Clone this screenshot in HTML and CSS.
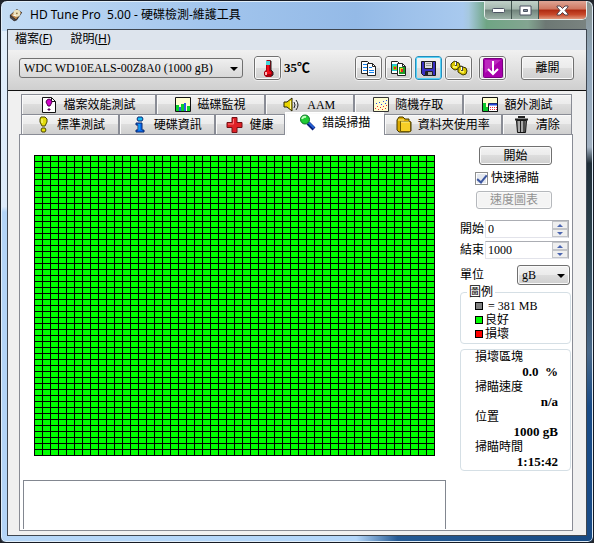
FILE: index.html
```html
<!DOCTYPE html>
<html lang="zh-Hant">
<head>
<meta charset="utf-8">
<title>HD Tune Pro 5.00</title>
<link rel="stylesheet" href="styles.css">
</head>
<body>
<div class="window">
  <header class="titlebar">
    <svg class="app-icon" viewBox="0 0 16 16"><path d="M1 8 9 1l6 4-6 9-3 1-5-4z" fill="#302c2b"/><path d="m2 8 7-6 5 3-6 8z" fill="#b98349"/><circle cx="9" cy="6" r="4" fill="#eee2bc"/><circle cx="9" cy="6" r="1" fill="#8a6b3c"/><path d="m2 9 5 4-1 2-5-4z" fill="#4e4a4c"/><path d="m4 8 4 1" stroke="#fff"/></svg>
    <h1 class="title">HD Tune Pro&nbsp; 5.00 - 硬碟檢測-維護工具</h1>
    <div class="controls">
      <button class="control" aria-label="Minimize"><svg width="13" height="7"><rect x=".5" y="1.5" width="12" height="4" rx="1" fill="#fff" stroke="#4c5362"/></svg></button>
      <button class="control" aria-label="Maximize"><svg width="13" height="11"><path d="M1 1h11v9H1z" fill="#fff" stroke="#4c5362"/><path d="M4.500 4.500h4v2h-4z" fill="#8992a0" stroke="#4c5362"/></svg></button>
      <button class="control control-close" aria-label="Close"><svg width="13" height="11"><path d="M1 1h3l2.500 2.500L9 1h3v1L9 5.500 12 9v1H9L6.500 7.500 4 10H1V9l3-3.500L1 2z" fill="#fff" stroke="#55424a"/></svg></button>
    </div>
  </header>
  <div class="client">
    <nav class="menubar">
      <a class="menu" href="#">檔案(<u>F</u>)</a>
      <a class="menu" href="#">說明(<u>H</u>)</a>
    </nav>
    <div class="toolbar">
      <span class="select-wrap drive"><select class="select" aria-label="Drive"><option>WDC WD10EALS-00Z8A0 (1000 gB)</option></select></span>
      <button class="tool" aria-label="Temperature"><svg width="16" height="18"><path d="M6 2 7 1h3l1 1v9l2 2v3l-2 2H6l-2-2v-3l2-2z" fill="#a80010"/><path d="M6 2h4v4H6z" fill="#46d4d8"/><path d="M7 6h2v6l2 1v2H6v-2l1-1z" fill="#f30b16"/><path d="M5 13h2v3H5z" fill="#ffb4b4"/><path d="M10 2h1v9l2 2v3l-2 1" fill="none" stroke="#222"/></svg></button>
      <output class="temperature">35<span>℃</span></output>
      <div class="tools">
        <button class="tool" aria-label="Copy text"><svg width="17" height="18"><path d="M1.500 2.500h6l2 2v10h-8z" fill="#fff" stroke="#222"/><path d="M3 5.500h4M3 8.500h5M3 11.500h5" stroke="#1582ed"/><path d="M7.500 4.500h5l3 3v9h-8z" fill="#fff" stroke="#222"/><path d="M12.500 4.500v3h3" fill="none" stroke="#222"/><path d="M9 8.500h3M9 11.500h5M9 13.500h5" stroke="#1582ed"/></svg></button>
        <button class="tool" aria-label="Copy image"><svg width="17" height="18"><path d="M1.500 2.500h6l2 2v10h-8z" fill="#fff" stroke="#222"/><path d="M2 5h6v7H2z" fill="#2ccbd2"/><path d="M3 7h4v4H3z" fill="#7ecf18"/><path d="M4 8h2v2H4z" fill="#e22"/><path d="M7.500 4.500h5l3 3v9h-8z" fill="#fff" stroke="#222"/><path d="M12.500 4.500v3h3" fill="none" stroke="#222"/><path d="M9 8h6v7H9z" fill="#1d9b27"/><path d="M10 9h3v4h-3z" fill="#e7d51a"/><path d="M11 10h2v3h-2z" fill="#e22"/></svg></button>
        <button class="tool tool-focus" aria-label="Save"><svg width="17" height="18"><path d="M1.500 2.500h14v14h-12l-2-2z" fill="#3930c4" stroke="#15151e"/><path d="M4.500 2.500h8v7h-8z" fill="#ddd" stroke="#222"/><path d="M6 4.500h5M6 6.500h5" stroke="#999"/><path d="M5.500 12.500h7v4h-7z" fill="#aaa" stroke="#222"/><path d="M6 13h2v3H6z" fill="#222"/></svg></button>
        <button class="tool" aria-label="Options"><svg width="18" height="18"><g fill="#d8c500" stroke="#3e3900"><path d="m3 3 2-1 1 1 3 1 1 3-2 3-3 1-2-1-2-2V5z"/><path d="m8 9 3-2 2 1 3 1 1 3-1 3-3 1-2-1-3-2z"/></g><path d="M3 8h4M10 12l4 1" stroke="#fff45a" stroke-width="2"/><path d="M6 2v5M12 7v5" stroke="#444" stroke-width="2"/><path d="M5.500 3v3m6 2v3" stroke="#fff"/></svg></button>
        <button class="tool tool-download" aria-label="Minimize to tray"><svg width="20" height="20"><rect x=".5" y=".5" width="19" height="19" rx="1" fill="#a800ac" stroke="#780080"/><path d="M2 2h16L2 15z" fill="#d051d0" opacity=".5"/><path d="M10 3v12M5 11l5 5 5-5" fill="none" stroke="#fff" stroke-width="2"/></svg></button>
        <button class="push exit">離開</button>
      </div>
    </div>
    <main class="body">
      <div class="tabs" role="tablist">
        <div class="tab-row">
          <button class="tab w135" role="tab"><svg width="16" height="17"><path d="M1.500 1.500h9l4 4v11h-13z" fill="#fff" stroke="#111"/><path d="M10.500 1.500v4h4" fill="none" stroke="#111"/><path d="m6 4 2-1 2 1 1 2-2 4H7L5 6z" fill="#d400cc" stroke="#500050"/><path d="M7 13h2v1H7z" fill="#d400cc" stroke="#500050"/></svg>檔案效能測試</button>
          <button class="tab w109" role="tab"><svg width="16" height="17"><path d="M.5 1.500h15v14H.5z" fill="#fffed0" stroke="#111"/><path d="M1 9h3v6H1zm5-1h3v7H6zm6 2h3v5h-3z" fill="#08d22c"/><path d="M4 11h2v4H4zm5-4h2v8H9z" fill="#3157e8"/></svg>磁碟監視</button>
          <button class="tab w88" role="tab"><svg width="18" height="16"><path d="M1 5h3l5-4v13l-5-4H1z" fill="#ead600" stroke="#282500"/><path d="M7.500 4v8" stroke="#fff799"/><path d="M11 5q2 3 0 6M13 3q4 5 0 10" fill="none" stroke="#222"/></svg><span class="latin">AAM</span></button>
          <button class="tab w109" role="tab"><svg width="16" height="17"><path d="M.5 1.500h15v14H.5z" fill="#fffed0" stroke="#333"/><path d="M2 12h1v1H2zm2-2h1v1H4zm1 3h1v1H5zm2-2h1v1H7zm2 2h1v1H9zm1-3h1v1h-1zm2 2h1v1h-1zm1-3h1v1h-1z" fill="#f03030"/><path d="M3 7h1v1H3zm3-1h1v1H6zm2 2h1v1H8zm2-3h1v1h-1zm2 2h1v1h-1zm1-3h1v1h-1z" fill="#284dea"/></svg>隨機存取</button>
          <button class="tab w109" role="tab"><svg width="16" height="17"><path d="M.5 1.500h15v14H.5z" fill="#fffed0" stroke="#111"/><path d="M1 7h3v8H1zm3 4h3v4H4z" fill="#0bc82c"/><path d="M6.500 7.500h9v8h-9z" fill="#fff" stroke="#111"/><path d="M7 8.500h8" stroke="#2447d9" stroke-width="2"/><path d="M8 11.500h7m-7 2h7" stroke="#e34" stroke-dasharray="1 1"/></svg>額外測試</button>
        </div>
        <div class="tab-row">
          <button class="tab w98" role="tab"><svg width="16" height="17"><path d="m6 1 4 0 2 2v3l-2 4H7L5 6V3z" fill="#e3dc0c" stroke="#4b4600"/><path d="M7 3v4" stroke="#ffffaa"/><path d="M7 12h3l1 2-1 2H7l-1-2z" fill="#e3dc0c" stroke="#4b4600"/></svg>標準測試</button>
          <button class="tab w96" role="tab"><svg width="16" height="17"><path d="M6 1h4l1 2-1 2H6L5 3z" fill="#1bb9f1" stroke="#062a77"/><path d="M4 7h6v7h2v2H4v-2h2V9H4z" fill="#0a6ff2" stroke="#08266c"/><path d="M7 8v6" stroke="#20bdf5"/></svg>硬碟資訊</button>
          <button class="tab w70" role="tab"><svg width="17" height="17"><path d="M6 1.500h5v5h5v5h-5v5H6v-5H1v-5h5z" fill="#df2026" stroke="#741015"/><path d="M7.500 3v5H2" fill="none" stroke="#f77"/></svg>健康</button>
          <button class="tab tab-active w99" role="tab" aria-selected="true"><svg width="17" height="17"><path d="m9 9 6 6" stroke="#081b77" stroke-width="4"/><path d="m9 8 6 6" stroke="#2460d5" stroke-width="2"/><circle cx="6" cy="5.500" r="4.500" fill="#20cc35" stroke="#087022"/><path d="M3 5q1-3 4-2" fill="none" stroke="#c2ffc0" stroke-width="2"/></svg>錯誤掃描</button>
          <button class="tab w118" role="tab"><svg width="16" height="17"><path d="m1 4 2-3h4l2 2h4v3h2v9l-2 1H3l-2-2z" fill="#dba900" stroke="#453800"/><path d="M4.500 5.500h10v10h-10z" fill="#f7cf27" stroke="#715a00"/><path d="M2 4h6M5 6h8" stroke="#fff48a"/></svg>資料夾使用率</button>
          <button class="tab w70" role="tab"><svg width="16" height="17"><path d="M2.500 4.500h10l-1 12h-8z" fill="#777" stroke="#111"/><path d="M5 5v11M8 5v11" stroke="#ddd"/><path d="M6.500 5v11M10 5v11" stroke="#222"/><path d="M1 3.500h13M5 2V1h5v1" fill="none" stroke="#222" stroke-width="2"/></svg>清除</button>
        </div>
      </div>
      <section class="panel">
        <div class="scan">
          <div class="blocks" role="img" aria-label="良好"></div>
          <div class="log"></div>
        </div>
        <aside class="side">
          <button class="push start">開始</button>
          <label class="check"><input type="checkbox" checked>快速掃瞄</label>
          <button class="push speed" disabled>速度圖表</button>
          <div class="field">
            <label for="from">開始</label>
            <span class="spin"><input id="from" type="text" value="0"><span class="steps"><button class="step" aria-label="+"></button><button class="step step-down" aria-label="-"></button></span></span>
          </div>
          <div class="field">
            <label for="to">結束</label>
            <span class="spin"><input id="to" type="text" value="1000"><span class="steps"><button class="step" aria-label="+"></button><button class="step step-down" aria-label="-"></button></span></span>
          </div>
          <div class="field unit">
            <label for="unit">單位</label>
            <span class="select-wrap"><select id="unit" class="select"><option>gB</option></select></span>
          </div>
          <fieldset class="group legend">
            <legend>圖例</legend>
            <div class="key"><i class="swatch"></i><span class="key-size">= 381 MB</span></div>
            <div class="key"><i class="swatch swatch-good"></i>良好</div>
            <div class="key"><i class="swatch swatch-bad"></i>損壞</div>
          </fieldset>
          <dl class="group stats">
            <dt>損壞區塊</dt><dd>0.0&nbsp; %</dd>
            <dt>掃瞄速度</dt><dd>n/a</dd>
            <dt>位置</dt><dd>1000 gB</dd>
            <dt>掃瞄時間</dt><dd>1:15:42</dd>
          </dl>
        </aside>
      </section>
    </main>
  </div>
</div>
</body>
</html>
```
FILE: styles.css
```css
* { box-sizing: border-box; }

body {
  margin: 0;
  background: #20242b;
  color: #000;
  font: 12px/16px "Liberation Serif", "Noto Sans CJK TC", serif;
}

button, input, select { font: inherit; color: inherit; margin: 0; padding: 0; }
svg { display: block; flex: none; }

/* window frame */
.window {
  min-height: 100vh;
  display: flex;
  flex-direction: column;
  padding: 0 6px 6px;
  border: 1px solid #171b24;
  border-radius: 7px 7px 6px 6px;
  background:
    linear-gradient(90deg, #b6d6f7, #b3d6fa 60%, #255a94 67%, #174a83) bottom / 100% 7px no-repeat,
    linear-gradient(#89938f, #91a8bd 10%, #a3b2c2 27%, #202e38 30%, #2c4550 45%, #49698a 65%, #194b86 75%) right / 7px 100% no-repeat,
    linear-gradient(90deg, #c4dcf4, #a2c5ed 35%, #94bae7 60%, #a8c9ee 78%, #a6c8df 79%, #6fa584 82%, #83a591 89%, #6d7874 92%, #7c8582) top / 100% 30px no-repeat,
    linear-gradient(#e2effb, #dceafa 38%, #b3d4f7 39%);
  box-shadow: inset 0 0 0 1px #e0edf8;
}

.titlebar { height: 28px; display: flex; align-items: center; gap: 7px; }
.app-icon { width: 14px; height: 16px; margin-left: 2px; }
.title {
  flex: 1;
  margin: 0;
  font: 12px/18px "Noto Sans", "Noto Sans CJK TC", sans-serif;
  white-space: nowrap;
}
.controls {
  display: flex;
  align-self: flex-start;
  border: 1px solid #e5eceb;
  border-top: 0;
  border-radius: 0 0 5px 5px;
  overflow: hidden;
}
.control {
  width: 27px;
  height: 18px;
  display: grid;
  place-items: center;
  border: 0;
  border-right: 1px solid #40524e;
  background: linear-gradient(#c1d1c9, #a3b6ad 45%, #70837b 50%, #9db2a7);
}
.control-close { width: 47px; border: 0; background: linear-gradient(#dfa595, #cf765f 45%, #ae2911 50%, #c7492b 75%, #df977c); }

.client {
  flex: 1;
  display: flex;
  flex-direction: column;
  border: 1px solid #3e4650;
  background: #f0f0f0;
}

.menubar {
  height: 20px;
  display: flex;
  gap: 18px;
  padding: 0 7px;
  background: #dde4ed;
  font: 12px/18px "Noto Sans", "Noto Sans CJK TC", sans-serif;
}
.menu { color: #000; text-decoration: none; }

/* toolbar */
.toolbar {
  display: flex;
  align-items: center;
  height: 41px;
  padding: 0 12px 4px 11px;
  border-bottom: 1px solid #111;
  background: linear-gradient(#f1f1f1, #cfcfcf);
}
.select-wrap { position: relative; display: block; }
.select-wrap::after {
  content: "";
  position: absolute;
  right: 5px;
  top: 9px;
  border: 4px solid transparent;
  border-top-color: #000;
  border-bottom: 0;
  pointer-events: none;
}
.select, .push, .tool {
  border: 1px solid #707070;
  border-radius: 3px;
  background: linear-gradient(#f3f3f3, #ebebeb 49%, #dddddd 50%, #cfcfcf);
  box-shadow: inset 0 0 0 1px #fafafa;
}
.select { appearance: none; width: 100%; height: 20px; padding: 0 4px; line-height: 16px; }
.drive { flex: 0 1 224px; }
.drive .select { background: linear-gradient(#efefef, #d8d8d8); box-shadow: none; }
.tool {
  width: 27px;
  height: 24px;
  display: grid;
  place-items: center;
  flex: none;
  outline: 1px solid #eee;
}
.drive + .tool { margin-left: 11px; }
.tool-focus { border-color: #258dbc; box-shadow: inset 0 0 0 1px #55d2f6; }
.temperature { margin-left: 3px; font-size: 13px; font-weight: bold; white-space: nowrap; }
.tools { display: flex; gap: 3px; margin-left: auto; }
.tool-download { margin-left: 4px; }
.exit { width: 53px; height: 24px; margin-left: 12px; }

/* tabs */
.body { flex: 1; display: flex; flex-direction: column; padding: 3px 13px 4px 11px; }
.tabs { padding: 0 1px 0 2px; }
.tab-row { display: flex; height: 20px; }
.tab {
  display: flex;
  align-items: center;
  justify-content: center;
  gap: 6px;
  min-width: 0;
  height: 20px;
  border: 1px solid #898c95;
  border-width: 1px 1px 0 1px;
  background: linear-gradient(#f3f3f3, #ebebeb 49%, #dddddd 50%, #cfcfcf);
  box-shadow: inset 1px 1px #fafafa;
  white-space: nowrap;
}
.tab-active {
  height: 24px;
  margin-top: -2px;
  padding-bottom: 4px;
  border-color: #fff;
  background: #fff;
  position: relative;
}
.latin { font-size: 12px; }
.w135 { flex: 135 1 0; }
.w118 { flex: 118 1 0; }
.w109 { flex: 109 1 0; }
.w99 { flex: 99 1 0; }
.w98 { flex: 98 1 0; }
.w96 { flex: 96 1 0; }
.w88 { flex: 88 1 0; }
.w70 { flex: 70 1 0; }

.panel {
  flex: 1;
  display: flex;
  gap: 14px;
  padding: 0 1px 1px 3px;
  border: 1px solid #898c95;
  background: #fff;
}
.scan { flex: 1; display: flex; flex-direction: column; }
.blocks {
  height: 301px;
  margin: 20px 11px 24px;
  background:
    linear-gradient(#000 1px, transparent 1px) 0 0 / 8px 6px,
    linear-gradient(90deg, #000 1px, #0f0 1px) 0 0 / 8px 6px;
}
.log { flex: 1; min-height: 40px; border: 1px solid #828790; border-bottom: 0; }

/* scan options */
.side { width: 111px; padding-top: 11px; }
.push { display: block; text-align: center; }
.start { width: 73px; height: 19px; line-height: 16px; margin-left: 19px; }
.check { display: flex; align-items: center; gap: 3px; height: 26px; margin-left: 15px; }
.check input {
  appearance: none;
  display: grid;
  place-items: center;
  width: 13px;
  height: 13px;
  border: 1px solid #8e8f8f;
  background: #e4e8ef;
  box-shadow: inset 0 0 0 1px #fff;
}
.check input:checked::before {
  content: "";
  width: 4px;
  height: 8px;
  border: solid #3c56a0;
  border-width: 0 2px 2px 0;
  transform: rotate(40deg);
}
.speed { width: 76px; height: 18px; line-height: 16px; margin: 0 0 11px 16px; }
.speed:disabled { color: #929292; border-color: #b5b8bc; background: #f4f4f4; }
.field { display: flex; align-items: center; gap: 1px; height: 18px; margin-bottom: 3px; }
.spin { display: flex; width: 84px; height: 18px; border: 1px solid #abadb3; border-left-color: #e2e3ea; border-bottom-color: #e2e3ea; }
.spin input { flex: 1; min-width: 0; padding: 0 2px; border: 0; background: transparent; outline: 0; }
.steps { width: 16px; display: flex; flex-direction: column; }
.step {
  flex: 1;
  display: grid;
  place-items: center;
  border: 1px solid #c2c4c8;
  background: #efefef;
}
.step::before { content: ""; border: 3px solid transparent; border-top: 0; border-bottom-color: #4b65b0; }
.step-down::before { border: 3px solid transparent; border-bottom: 0; border-top-color: #4b65b0; }
.unit { justify-content: space-between; height: 20px; margin: 6px 1px 0 0; }
.unit .select-wrap { width: 53px; }

.group { margin: 0; padding: 0; border: 1px solid #d5dfe5; border-radius: 4px; }
.legend { line-height: 14px; padding-left: 14px; margin-bottom: 5px; height: 59px; }
.legend legend { margin-left: -8px; padding: 0 2px; }
.key { display: flex; align-items: center; gap: 2px; height: 14px; }
.key-size { padding-left: 3px; }
.swatch { width: 8px; height: 8px; border: 1px solid #000; background: #808080; }
.swatch-good { background: #0f0; }
.swatch-bad { background: #f00; }
.stats { padding: 0 12px 0 14px; }
.stats dt { line-height: 14px; }
.stats dd { margin: 0; text-align: right; font-size: 13px; font-weight: bold; white-space: nowrap; }
```
